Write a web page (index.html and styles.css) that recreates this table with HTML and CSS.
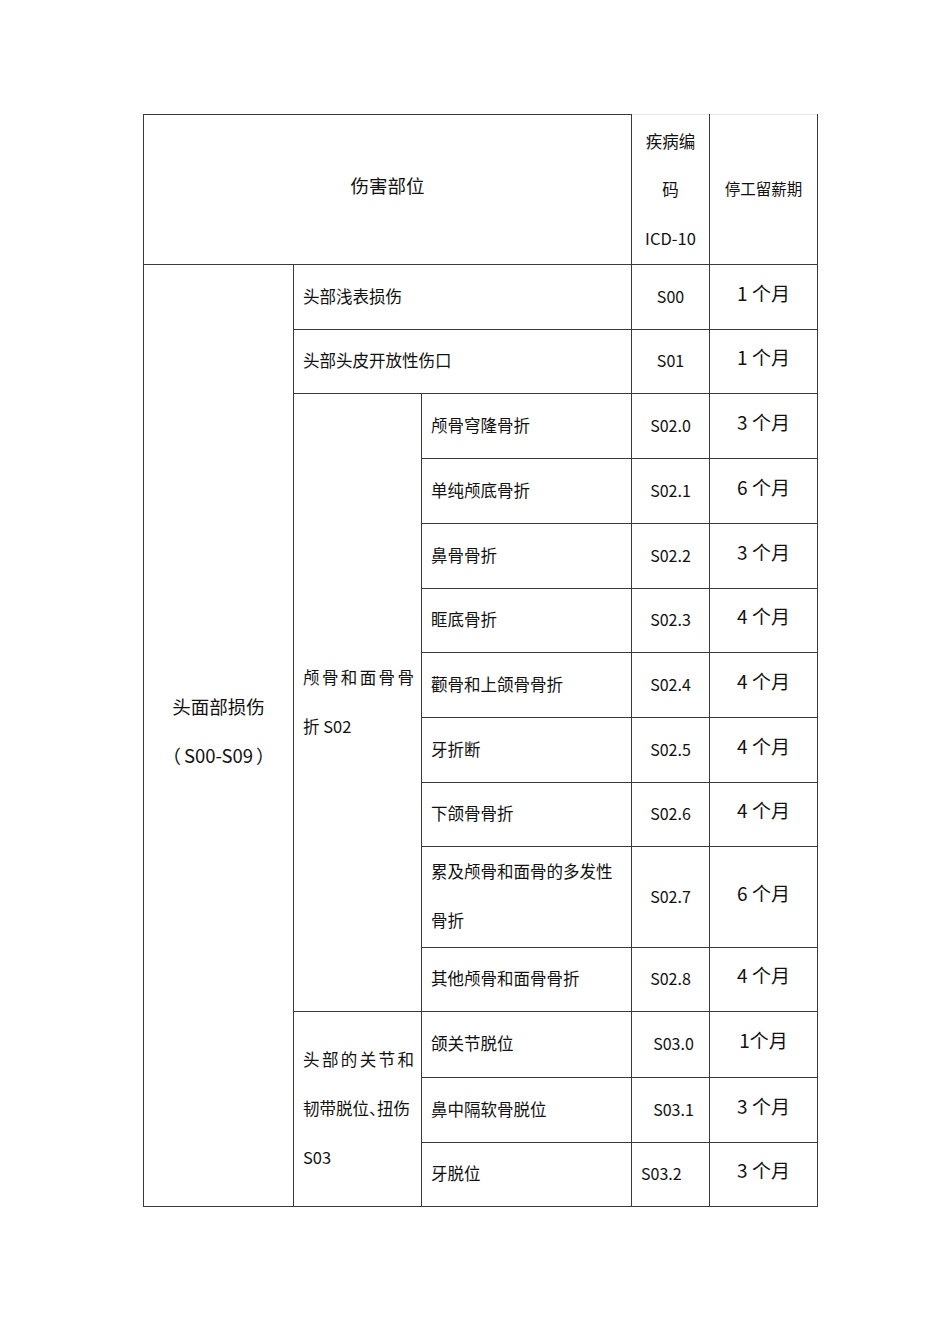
FILE: index.html
```html
<!DOCTYPE html>
<html lang="zh">
<head>
<meta charset="utf-8">
<link rel="stylesheet" href="styles.css">
</head>
<body>
<table class="tbl">
  <colgroup>
    <col class="c1"><col class="c2"><col class="c3"><col class="c4"><col class="c5">
  </colgroup>
  <tr class="h150">
    <td colspan="3" class="center big head">伤害部位</td>
    <td class="center hd lighttop">疾病编<br>码<br>ICD-10</td>
    <td class="center hd2 lighttop">停工留薪期</td>
  </tr>
  <tr class="h65">
    <td rowspan="14" class="center big cat">头面部损伤<br><span class="pl">（</span>S00-S09<span class="pr">）</span></td>
    <td colspan="2" class="left">头部浅表损伤</td>
    <td class="center code">S00</td>
    <td class="center mon">1 个月</td>
  </tr>
  <tr class="h64">
    <td colspan="2" class="left">头部头皮开放性伤口</td>
    <td class="center code">S01</td>
    <td class="center mon">1 个月</td>
  </tr>
  <tr class="h65">
    <td rowspan="9" class="left sub"><div class="jl">颅骨和面骨骨</div><div>折 S02</div></td>
    <td class="left">颅骨穹隆骨折</td>
    <td class="center code">S02.0</td>
    <td class="center mon">3 个月</td>
  </tr>
  <tr class="h65">
    <td class="left">单纯颅底骨折</td>
    <td class="center code">S02.1</td>
    <td class="center mon">6 个月</td>
  </tr>
  <tr class="h65">
    <td class="left">鼻骨骨折</td>
    <td class="center code">S02.2</td>
    <td class="center mon">3 个月</td>
  </tr>
  <tr class="h64">
    <td class="left">眶底骨折</td>
    <td class="center code">S02.3</td>
    <td class="center mon">4 个月</td>
  </tr>
  <tr class="h65">
    <td class="left">颧骨和上颌骨骨折</td>
    <td class="center code">S02.4</td>
    <td class="center mon">4 个月</td>
  </tr>
  <tr class="h65">
    <td class="left">牙折断</td>
    <td class="center code">S02.5</td>
    <td class="center mon">4 个月</td>
  </tr>
  <tr class="h64">
    <td class="left">下颌骨骨折</td>
    <td class="center code">S02.6</td>
    <td class="center mon">4 个月</td>
  </tr>
  <tr class="h101">
    <td class="left">累及颅骨和面骨的多发性<br>骨折</td>
    <td class="center code">S02.7</td>
    <td class="center mon">6 个月</td>
  </tr>
  <tr class="h64">
    <td class="left">其他颅骨和面骨骨折</td>
    <td class="center code">S02.8</td>
    <td class="center mon">4 个月</td>
  </tr>
  <tr class="h66">
    <td rowspan="3" class="left sub"><div class="jl">头部的关节和</div><div>韧带脱位<span class="dun">、</span>扭伤</div><div>S03</div></td>
    <td class="left">颌关节脱位</td>
    <td class="center code shift">S03.0</td>
    <td class="center mon">1个月</td>
  </tr>
  <tr class="h65">
    <td class="left">鼻中隔软骨脱位</td>
    <td class="center code shift">S03.1</td>
    <td class="center mon">3 个月</td>
  </tr>
  <tr class="h64">
    <td class="left">牙脱位</td>
    <td class="left code">S03.2</td>
    <td class="center mon">3 个月</td>
  </tr>
</table>
</body>
</html>
```

FILE: styles.css
```css
body {
  margin: 0;
  padding: 114px 0 0 143px;
  background: #fff;
  font-family: "Noto Sans CJK SC", "Noto Sans", sans-serif;
  color: #111;
}
.tbl {
  border-collapse: collapse;
  table-layout: fixed;
  width: 674px;
}
.c1 { width: 150px; }
.c2 { width: 128px; }
.c3 { width: 210px; }
.c4 { width: 78px; }
.c5 { width: 108px; }
.tbl td {
  border: 1px solid #3a3a3a;
  padding: 0 8px 2px 9px;
  font-size: 16.5px;
  line-height: 49px;
  vertical-align: middle;
  overflow: hidden;
  white-space: nowrap;
}
.tbl td.lighttop { border-top-color: #e6e6e6; }
.tbl td.center { text-align: center; padding: 0 4px 2px; }
.tbl td.left { text-align: left; }
.tbl td.big { font-size: 18.5px; }
.tbl td.head { padding-bottom: 8px; }
.tbl td.cat { padding-bottom: 10px; }
.tbl td.hd { font-size: 16.5px; padding: 0 2px; line-height: 48.5px; }
.tbl td.hd2 { font-size: 15.5px; padding-bottom: 2px; }
.tbl td.code { font-size: 16px; }
.tbl td.code.shift { padding-left: 7px; padding-right: 1px; }
.tbl td.code.left { padding-left: 9px; }
.tbl td.mon { font-size: 19px; line-height: 1.2; padding-bottom: 8px; }
.tbl td.sub { padding: 0 7px 2px 9px; }
.pl { margin-right: 3px; }
.pr { margin-left: 3px; }
.jl {
  text-align: justify;
  text-align-last: justify;
}
.dun {
  display: inline-block;
  width: 8px;
  overflow: visible;
  letter-spacing: -8px;
}
.h150 { height: 150px; }
.h64 { height: 64px; }
.h65 { height: 65px; }
.h66 { height: 66px; }
.h101 { height: 101px; }
```
